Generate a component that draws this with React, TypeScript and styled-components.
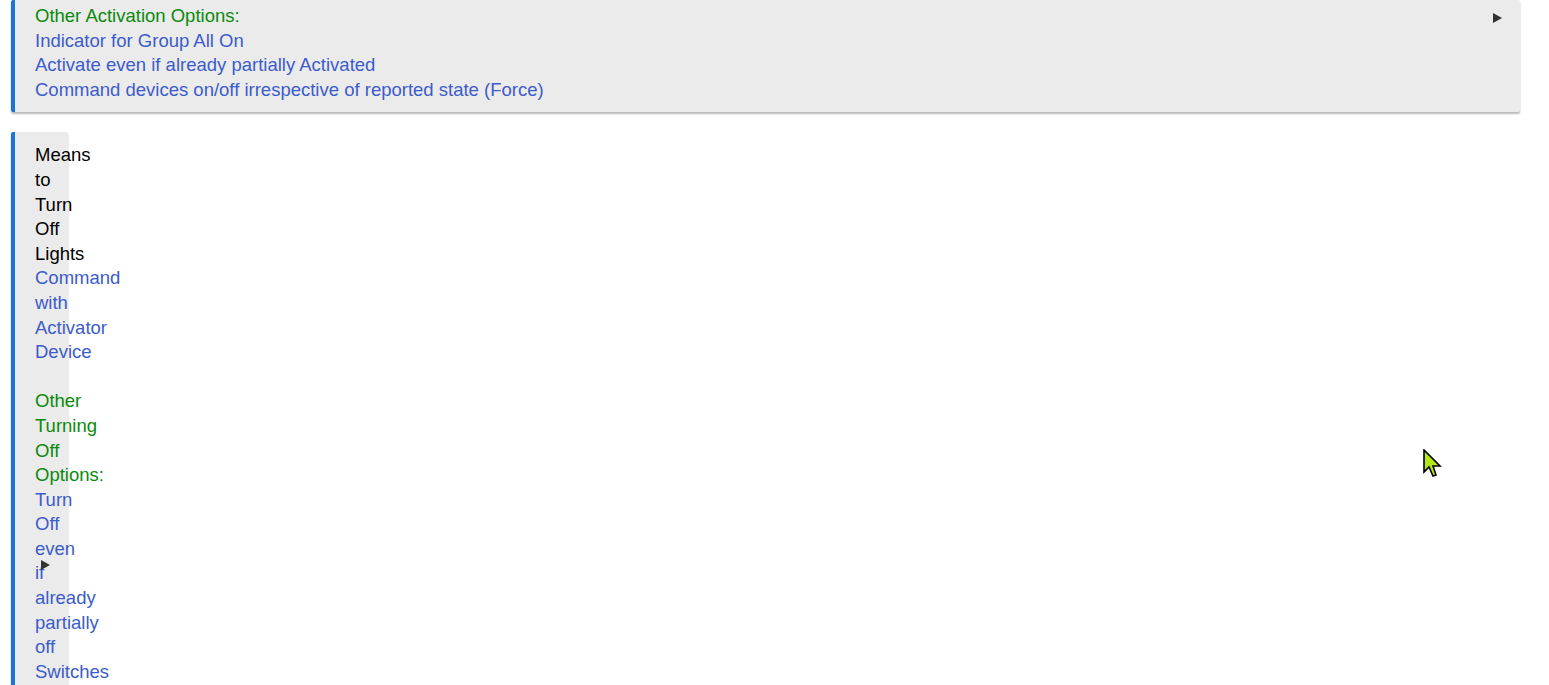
import React from 'react';
import styled, { createGlobalStyle } from 'styled-components';

const GlobalStyle = createGlobalStyle`
    html, body {
        margin: 0;
        padding: 0;
        background-color: #fff;
        font-family: "Liberation Sans", Arial, sans-serif;
        overflow: hidden;
    }
`;

const StyledPage = styled.div`
    display: flex;
    flex-direction: column;
    align-items: flex-start;
    gap: 20px;
    padding: 0 29px 0 11px;
    height: 685px;
    position: relative;
`;

const StyledCard = styled.div<{ $width?: string; $pad: string }>`
    position: relative;
    box-sizing: border-box;
    width: ${p => p.$width || '100%'};
    flex-shrink: 0;
    background-color: #ebebeb;
    border-left: 4px solid #1976d2;
    border-radius: 2px;
    box-shadow: 0 2px 2px rgba(0, 0, 0, 0.28);
    padding: ${p => p.$pad};
    font-size: 18.5px;
    line-height: 24.6px;
`;

const Title = styled.div`
    color: #000;
`;

const Section = styled.div`
    color: #0b8a0b;
`;

const Option = styled.div`
    color: #3c5ccc;
`;

const Spacer = styled.div`
    height: 24.6px;
`;

const Arrow = styled.span<{ $top: number; $right: number }>`
    position: absolute;
    top: ${p => p.$top}px;
    right: ${p => p.$right}px;
    width: 0;
    height: 0;
    border-top: 5px solid transparent;
    border-bottom: 5px solid transparent;
    border-left: 9px solid #333;
`;

const Cursor = styled.svg`
    position: absolute;
    left: 1423px;
    top: 449px;
`;

const App = () => {
    return <>
        <GlobalStyle />
        <StyledPage>
            <StyledCard $pad="4px 20px 10px 20px">
                <Section>Other Activation Options:</Section>
                <Option>Indicator for Group All On</Option>
                <Option>Activate even if already partially Activated</Option>
                <Option>Command devices on/off irrespective of reported state (Force)</Option>
                <Arrow $top={13} $right={18} />
            </StyledCard>
            <StyledCard $width="57px" $pad="11px 0 40px 20px">
                <Title>Means<br />to<br />Turn<br />Off<br />Lights</Title>
                <Option>Command<br />with<br />Activator<br />Device</Option>
                <Spacer />
                <Section>Other<br />Turning<br />Off<br />Options:</Section>
                <Option>Turn<br />Off<br />even<br />if<br />already<br />partially<br />off<br />Switches</Option>
                <Arrow $top={428} $right={18} />
            </StyledCard>
            <Cursor width="22" height="32" viewBox="0 0 22 32">
                <path d="M1 1 L1 23 L6 18 L10 27 L13 26 L10 17 L17 17 Z"
                    fill="#b4e619" stroke="#000" strokeWidth="1.6" strokeLinejoin="miter" />
            </Cursor>
        </StyledPage>
    </>
}

export default App;
